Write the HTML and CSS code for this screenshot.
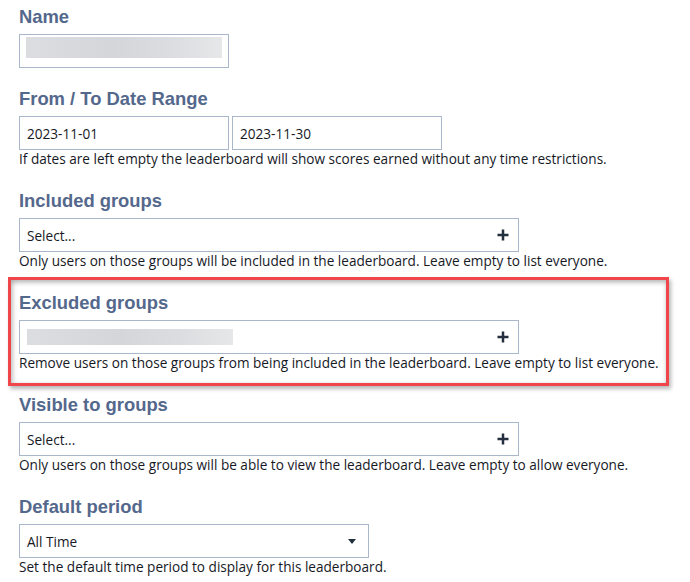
FILE: index.html
```html
<!DOCTYPE html>
<html lang="en">
<head>
    <meta charset="UTF-8">
    <title>Leaderboard Settings</title>
    <link rel="stylesheet" href="styles.css">
</head>
<body>
    <form class="settings">
        <div class="field field-name">
            <label class="field-label">Name</label>
            <div class="box box-name"><span class="redacted redacted-name"></span></div>
        </div>

        <div class="field">
            <label class="field-label">From / To Date Range</label>
            <div class="date-row">
                <div class="box box-date">2023-11-01</div>
                <div class="box box-date">2023-11-30</div>
            </div>
            <p class="hint">If dates are left empty the leaderboard will show scores earned without any time restrictions.</p>
        </div>

        <div class="field">
            <label class="field-label">Included groups</label>
            <div class="box box-multi">
                <span>Select...</span>
                <svg class="plus" width="12" height="12" viewBox="0 0 12 12"><path d="M6 0.5v11M0.5 6h11" stroke="#232f3e" stroke-width="2.5"/></svg>
            </div>
            <p class="hint">Only users on those groups will be included in the leaderboard. Leave empty to list everyone.</p>
        </div>

        <!-- highlighted section -->
        <div class="callout">
            <div class="field">
                <label class="field-label">Excluded groups</label>
                <div class="box box-multi">
                    <span class="redacted redacted-groups"></span>
                    <svg class="plus" width="12" height="12" viewBox="0 0 12 12"><path d="M6 0.5v11M0.5 6h11" stroke="#232f3e" stroke-width="2.5"/></svg>
                </div>
                <p class="hint">Remove users on those groups from being included in the leaderboard. Leave empty to list everyone.</p>
            </div>
        </div>

        <div class="field">
            <label class="field-label">Visible to groups</label>
            <div class="box box-multi">
                <span>Select...</span>
                <svg class="plus" width="12" height="12" viewBox="0 0 12 12"><path d="M6 0.5v11M0.5 6h11" stroke="#232f3e" stroke-width="2.5"/></svg>
            </div>
            <p class="hint">Only users on those groups will be able to view the leaderboard. Leave empty to allow everyone.</p>
        </div>

        <div class="field">
            <label class="field-label">Default period</label>
            <div class="box box-select">
                <span>All Time</span>
                <svg class="caret" width="8" height="5" viewBox="0 0 8 5"><path d="M0 0h8L4 5z" fill="#232f3e"/></svg>
            </div>
            <p class="hint">Set the default time period to display for this leaderboard.</p>
        </div>
    </form>
</body>
</html>
```

FILE: styles.css
```css
body {
    margin: 0;
    background-color: #ffffff;
    font-family: "Open Sans", "Noto Sans", sans-serif;
    font-size: 13.6px;
    color: #16191f;
}
.settings {
    padding: 6px 0 0 19px;
}
.field {
    margin-bottom: 22px;
}
.field-name {
    margin-bottom: 20px;
}
.field-label {
    display: block;
    height: 22px;
    margin-bottom: 6px;
    font-family: "Liberation Sans", Arial, sans-serif;
    font-weight: bold;
    font-size: 18.4px;
    line-height: 22px;
    color: #54688c;
}
.box {
    box-sizing: border-box;
    height: 34px;
    border: 1px solid #aab7cb;
    padding: 0 8px 0 7px;
    display: flex;
    align-items: center;
    justify-content: space-between;
    background: #fff;
}
.box-name {
    width: 210px;
    padding: 0 6px;
}
.date-row {
    display: flex;
    gap: 3px;
}
.box-date {
    width: 210px;
}
.box-multi {
    width: 500px;
    padding-right: 9px;
}
.box-select {
    width: 350px;
    padding-right: 12px;
}
.redacted {
    display: block;
    background: linear-gradient(90deg, #dcdde0 0%, #d4d6da 45%, #dcdde0 75%, #e6e7e9 100%);
}
.redacted-name {
    width: 196px;
    height: 21px;
    margin-top: -8px;
}
.redacted-groups {
    width: 206px;
    height: 16px;
}
.hint {
    margin: 0;
    height: 18px;
    line-height: 18px;
}
/* red highlight around one section */
.callout {
    margin: -15px 0 8px -11px;
    width: 647px;
    padding: 12px 0 0 8px;
    border: 3px solid #f0454a;
    box-shadow: 2px 3px 4px rgba(0, 0, 0, 0.28), inset 0 3px 4px rgba(0, 0, 0, 0.22), inset 3px 0 4px rgba(0, 0, 0, 0.12);
}
.callout .field {
    margin-bottom: 11px;
}
```
